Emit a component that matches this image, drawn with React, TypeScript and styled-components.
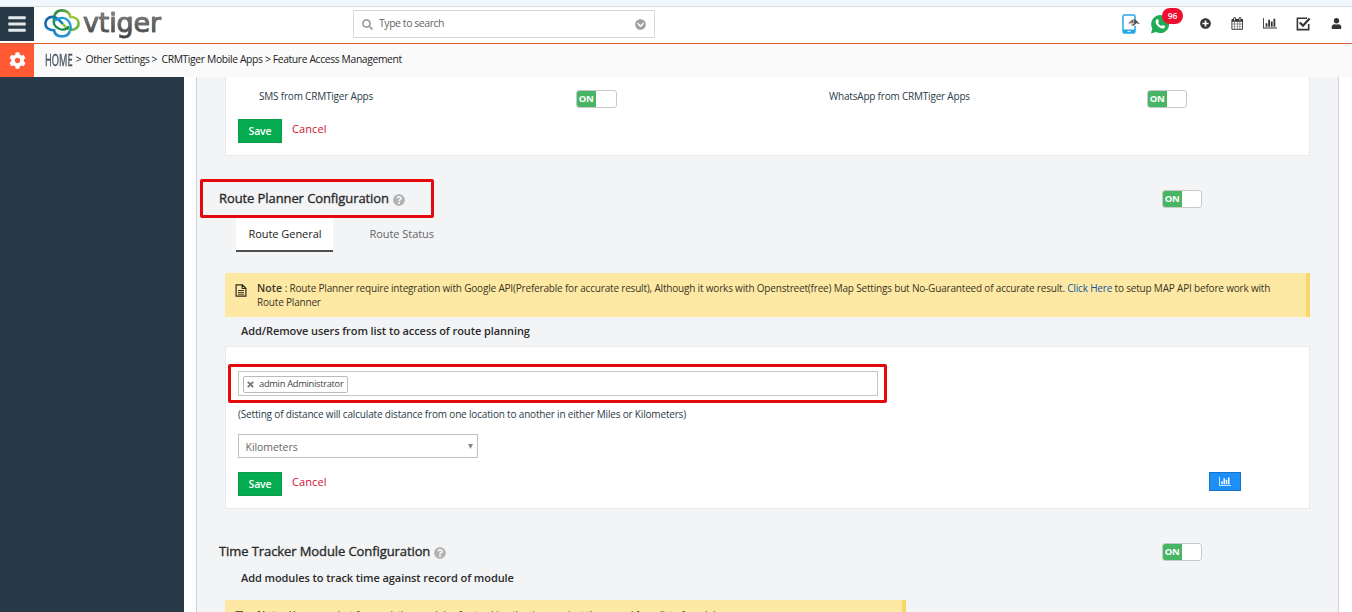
import React from "react";
import styled, { createGlobalStyle } from "styled-components";
import { FaBars, FaChevronCircleDown, FaCog, FaPlusCircle, FaQuestionCircle, FaSearch, FaUser } from "react-icons/fa";

const GlobalStyle = createGlobalStyle`
  * { box-sizing: border-box; }
  body { margin: 0; background: #fff; font-family: "Open Sans", "Noto Sans", sans-serif; color: #2c3b49; }
`;

const Page = styled.div`
  width: 1352px;
  height: 612px;
  overflow: hidden;
  display: flex;
  flex-direction: column;
  background: #fff;
`;
const TopStrip = styled.div`
  height: 7px;
  flex: none;
  background: #f1f7fe;
  border-bottom: 1px solid #dbdfe3;
`;
const Header = styled.header`
  height: 37px;
  flex: none;
  display: flex;
  align-items: flex-start;
  border-bottom: 1px solid #e0592e;
`;
const SquareButton = styled.div<{ $bg: string; $h: number; $fg: string }>`
  width: 34px;
  height: ${(p) => p.$h}px;
  flex: none;
  display: flex;
  align-items: center;
  justify-content: center;
  background: ${(p) => p.$bg};
  color: ${(p) => p.$fg};
`;
const Logo = styled.div`
  display: flex;
  width: 319px;
  height: 36px;
  padding-left: 9px;
`;
const LogoText = styled.div`
  margin-left: 2px;
  margin-top: -2px;
  font: 27px/36px "DejaVu Sans", sans-serif;
  letter-spacing: -0.15px;
  height: 36px;
  background: linear-gradient(#8d8d8d 20%, #333 90%);
  background-clip: text;
  color: transparent;
  -webkit-text-stroke: 0.7px #666;
`;
const Search = styled.div`
  width: 302px;
  height: 28px;
  margin-top: 3px;
  padding: 0 8px;
  display: flex;
  align-items: center;
  border: 1px solid #d5d9d9;
  color: #a0a0a0;
`;
const SearchText = styled.span`
  flex: 1;
  margin-left: 6px;
  padding-bottom: 2px;
  font-size: 10.5px;
  letter-spacing: -0.45px;
  letter-spacing: -0.45px;
  color: #666;
`;
const Tools = styled.div`
  margin-left: auto;
  height: 33px;
  display: flex;
  align-items: center;
  color: #333;
`;
const Tool = styled.div<{ $w: number }>`
  width: ${(p) => p.$w}px;
  display: flex;
  justify-content: center;
  position: relative;
`;
const Badge = styled.span`
  position: absolute;
  left: 12px;
  top: -6px;
  width: 21px;
  height: 16px;
  border-radius: 8px;
  background: #f00c2e;
  color: #fff;
  font-size: 8.5px;
  font-weight: 600;
  line-height: 16px;
  text-align: center;
`;
const Crumbs = styled.nav`
  height: 33px;
  flex: none;
  display: flex;
  background: #fafafa;
  font-size: 10.3px;
  line-height: 30px;
  color: #222;
  white-space: pre;
`;
const Home = styled.span`
  width: 28px;
  margin-left: 11px;
  font-size: 16px;
  line-height: 32px;
  color: #465461;
  -webkit-text-stroke: 0.4px #465461;
  transform: scaleX(0.58);
  transform-origin: left;
`;
const Crumb = styled.span<{ $w: number }>`
  width: ${(p) => p.$w}px;
  letter-spacing: -0.35px;
`;
const Separator = styled.span<{ $w: number }>`
  width: ${(p) => p.$w}px;
`;
const Body = styled.div`
  flex: 1;
  min-height: 0;
  display: flex;
`;
const Sidebar = styled.aside`
  width: 184px;
  flex: none;
  background: #283a48;
`;
const Content = styled.main`
  width: 1143px;
  margin-left: 12px;
  padding-left: 28px;
  background: #f3f4f6;
  border: 1px solid #cfd2d6;
  border-width: 0 1px;
`;
const Panel = styled.section<{ $h: number; $first?: boolean }>`
  width: 1085px;
  height: ${(p) => p.$h}px;
  padding-left: 12px;
  background: #fff;
  border: 1px solid #e8eaeb;
  ${(p) => p.$first && "border-top: 0;"}
`;
const AppRow = styled.div`
  display: flex;
  height: 42px;
  padding: 10px 0 0 21px;
`;
const AppLabel = styled.span<{ $w: number }>`
  width: ${(p) => p.$w}px;
  font-size: 10px;
  line-height: 18px;
  letter-spacing: -0.2px;
`;
const ToggleBox = styled.span<{ $w?: number }>`
  width: ${(p) => p.$w ?? 40}px;
  height: 18px;
  margin-top: 3px;
  display: flex;
  border: 1px solid #c9c9c9;
  border-radius: 3px;
  background: #fff;
  overflow: hidden;
  &::before {
    content: "ON";
    width: 20px;
    height: 18px;
    margin: -1px 0 0 -1px;
    background: #48b565;
    color: #fff;
    font: 700 9.5px/18px "Open Sans", sans-serif;
    letter-spacing: -0.3px;
    text-align: center;
  }
`;
const Gap = styled.span<{ $w: number }>`
  width: ${(p) => p.$w}px;
  flex: none;
`;
const Actions = styled.div`
  display: flex;
  height: 24px;
`;
const Save = styled.button`
  width: 44px;
  height: 24px;
  padding: 0;
  border: 1px solid #0d9d4b;
  background: #04ab4f;
  color: #fff;
  font: 600 10.5px/22px "Open Sans", sans-serif;
  letter-spacing: -0.15px;
`;
const Cancel = styled.a`
  margin-left: 10px;
  font-size: 11px;
  line-height: 20px;
  letter-spacing: 0.1px;
  color: #cf1230;
`;
const ChartButton = styled.button`
  width: 32px;
  height: 19px;
  margin-left: 882px;
  padding: 0;
  display: flex;
  align-items: center;
  justify-content: center;
  border: 1px solid #1573cc;
  background: #1e8ff7;
  color: #fff;
`;
const Heading = styled.div`
  height: 39px;
  margin-top: 23px;
  margin-left: -25px;
  width: 1008px;
  padding: 0 6px 0 19px;
  display: flex;
  align-items: center;
  position: relative;
`;
const Title = styled.h2`
  margin: 0 4px 2px 0;
  font-size: 13px;
  line-height: 18px;
  font-weight: 500;
  -webkit-text-stroke: 0.35px #2b2b2b;
  color: #2b2b2b;
  letter-spacing: -0.09px;
`;
const Help = styled(FaQuestionCircle)`
  margin-top: 3px;
  color: #b1b1b1;
`;
const HeadingToggle = styled(ToggleBox)`
  margin: 1px 0 0 auto;
`;
const RedFrame = styled.span<{ $l: number; $t: number; $w: number }>`
  position: absolute;
  left: ${(p) => p.$l}px;
  top: ${(p) => p.$t}px;
  width: ${(p) => p.$w}px;
  height: 39px;
  border: 3px solid #e40a0c;
  border-radius: 2px;
`;
const Tabs = styled.div`
  display: flex;
  margin-left: 11px;
  height: 34px;
  font-size: 11px;
  line-height: 32px;
`;
const Tab = styled.span<{ $active?: boolean }>`
  width: 97px;
  margin-right: 24px;
  padding-left: 12.5px;
  white-space: nowrap;
  letter-spacing: -0.05px;
  color: ${(p) => (p.$active ? "#222" : "#666")};
  background: ${(p) => (p.$active ? "#fff" : "none")};
  border-bottom: ${(p) => (p.$active ? "2px solid #4d4f51" : "0")};
`;
const Note = styled.div<{ $w: number; $mt: number }>`
  width: ${(p) => p.$w}px;
  height: 44px;
  margin-top: ${(p) => p.$mt}px;
  padding: 8px 0 0 10px;
  display: flex;
  gap: 10px;
  background: #fee9a4;
  border-right: 4px solid #f8d768;
  color: #3a3524;
  font-size: 10px;
  line-height: 14px;
`;
const NoteText = styled.div`
  white-space: nowrap;
  letter-spacing: -0.184px;
  b { font-weight: 600; font-size: 10.5px; letter-spacing: 0.1px; }
  a { color: #1057a5; }
`;
const SubHeading = styled.h3<{ $mt?: number }>`
  margin: ${(p) => p.$mt ?? 0}px 0 0 16px;
  height: 29px;
  font-size: 11px;
  line-height: 28px;
  font-weight: 600;
  color: #2b2b2b;
  letter-spacing: -0.08px;
`;
const UserField = styled.div`
  position: relative;
  width: 640px;
  height: 25px;
  margin-top: 24px;
  padding: 4px;
  display: flex;
  border: 1px solid #c4c4c4;
`;
const UserTag = styled.span`
  width: 105px;
  height: 17px;
  padding: 0 0 1px 3px;
  display: flex;
  align-items: center;
  gap: 5px;
  border: 1px solid #bbb;
  border-radius: 2px;
  font-size: 9.3px;
  line-height: 14px;
  letter-spacing: -0.29px;
  color: #444;
  white-space: nowrap;
  svg { flex: none; margin-top: 1px; }
`;
const Hint = styled.p`
  margin: 9px 0 10px;
  height: 19px;
  font-size: 10px;
  line-height: 19px;
  letter-spacing: -0.175px;
`;
const Select = styled.div`
  width: 240px;
  height: 24px;
  margin-bottom: 14px;
  padding: 1px 4px 0 6.5px;
  display: flex;
  align-items: center;
  justify-content: space-between;
  border: 1px solid #c0c0c0;
  font-size: 10.5px;
  letter-spacing: -0.05px;
  color: #666;
`;

const CloudMark = () => (
  <svg width="38" height="32" viewBox="0 0 38 32" fill="none" strokeWidth="2.7" strokeLinecap="round">
    <defs>
      <linearGradient id="green" x1="0" y1="0" x2="1" y2="1">
        <stop offset="0" stopColor="#118048" />
        <stop offset=".5" stopColor="#a6c93b" />
        <stop offset="1" stopColor="#5fb546" />
      </linearGradient>
      <linearGradient id="blue" x1="0" y1="0" x2="1" y2="1">
        <stop offset="0" stopColor="#1464ac" />
        <stop offset="1" stopColor="#2a9bd7" />
      </linearGradient>
    </defs>
    <path d="M11 10C12 5 15 3.3 19 3.3c4.400 0 8 3 8.400 6.700 5 0 8.200 2.500 8.200 6.400 0 3.800-3.300 6.400-6.800 6.400-4.800 0-6.600-3.200-9-6" stroke="url(#green)" />
    <path d="M26.500 25c-1.300 3.500-4 4.300-7.400 4.300-4.600 0-7.500-2-8-6C5 23.300 2.400 20.300 2.400 16.600c0-4.100 3.200-6.800 7-6.800 5 0 7 3.200 9.500 6.200" stroke="url(#blue)" />
    <path d="M11 10.500c-1 4.500-.2 9.500 5.500 11.500 4 1.200 7.500-.2 9-2.200" stroke="#178c4c" strokeWidth="2.200" />
    <path d="M12.500 13.500c3.500-3 9-3.700 12.300-.3 2.400 2.700 3.400 6.300 2.900 9.800" stroke="#1b9ad8" strokeWidth="2.200" />
  </svg>
);
const ChartIcon = ({ size }: { size: number }) => (
  <svg width={size} height={(size * 7) / 8} viewBox="0 0 2048 1792" fill="currentColor">
    <path d="M640 896v512h-256v-512h256zm384-512v1024h-256v-1024h256zm1024 1152v128h-2048v-1536h128v1408h1920zm-640-896v768h-256v-768h256zm384-384v1152h-256v-1152h256z" />
  </svg>
);
const CalendarIcon = () => (
  <svg width="12.5" height="13" viewBox="0 0 1792 1792" fill="currentColor">
    <path d="M192 1664h288v-288h-288v288zm352 0h320v-288h-320v288zm-352-352h288v-320h-288v320zm352 0h320v-320h-320v320zm-352-384h288v-288h-288v288zm736 736h320v-288h-320v288zm-384-736h320v-288h-320v288zm768 736h288v-288h-288v288zm-384-352h320v-320h-320v320zm-352-864v-288q0-13-9.500-22.500t-22.500-9.500h-64q-13 0-22.500 9.500t-9.500 22.500v288q0 13 9.500 22.500t22.500 9.500h64q13 0 22.500-9.500t9.500-22.500zm736 864h288v-320h-288v320zm-384-384h320v-288h-320v288zm384 0h288v-288h-288v288zm32-480v-288q0-13-9.500-22.500t-22.500-9.500h-64q-13 0-22.500 9.500t-9.500 22.500v288q0 13 9.500 22.500t22.500 9.500h64q13 0 22.500-9.500t9.500-22.500zm384-64v1280q0 52-38 90t-90 38h-1408q-52 0-90-38t-38-90v-1280q0-52 38-90t90-38h128v-96q0-66 47-113t113-47h64q66 0 113 47t47 113v96h384v-96q0-66 47-113t113-47h64q66 0 113 47t47 113v96h128q52 0 90 38t38 90z" />
  </svg>
);
const CheckIcon = () => (
  <svg width="15" height="14" viewBox="0 0 15 14" fill="none" stroke="currentColor">
    <path d="M12.700 7v5.600H1.400V1.200H11" strokeWidth="1.600" />
    <path d="M3.800 5.500 7 8.700 13.600 1.500" strokeWidth="2.300" />
  </svg>
);
const PhoneIcon = () => (
  <svg width="20" height="20" viewBox="0 0 20 20" fill="none">
    <path d="M14 7V2.500Q14 1 12.500 1h-9Q2 1 2 2.500v15Q2 19 3.500 19h9q1.500 0 1.500-1.500V12" stroke="#25a6ea" strokeWidth="1.500" />
    <path d="M2 15.500h12v2.500q0 1-1.500 1h-9Q2 19 2 18z" fill="#25a6ea" />
    <path d="M6.500 17.300h3" stroke="#fff" />
    <path d="M7 9.500 10 6.500 14 5l5 5-3.500-.8L12 12.300 10 10z" fill="#555" />
    <path d="M7 9.500h6M10 6.500v5M13 6l-1.500 5" stroke="#ddd" strokeWidth=".8" />
  </svg>
);
const WhatsIcon = () => (
  <svg width="20" height="20" viewBox="0 0 20 20">
    <path d="M1 19.500 2.300 14.500A9 9 0 1 1 6 18.100z" fill="#22ab55" />
    <path d="M6.600 5.500c.6-.6 1.300-.5 1.600.2l.7 1.700c.2.500-.8 1.200-.7 1.600.6 1.300 1.800 2.400 3.200 3 .5.100 1.100-1.200 1.700-.9l1.700.9c.6.4.1 1.800-.6 2.200-1.300.8-3.200.1-4.900-1-1.600-1.100-3-2.800-3.500-4.300-.4-1.400-.2-2.500.8-3.400z" fill="#fff" />
  </svg>
);
const FileIcon = () => (
  <svg width="12" height="13" viewBox="0 0 12 13" fill="none" stroke="#2f2b1c">
    <path d="M1.100.8h6.300l3.500 3.500v7.900H1.100zM7.200 1v3.500h3.500" strokeWidth="1.200" />
    <path d="M3 6.500h6M3 8.400h6M3 10.200h6" strokeWidth=".9" />
  </svg>
);
const FileSlot = styled.span`
  width: 12px;
  height: 13px;
  margin-top: 3px;
  display: flex;
`;
const RemoveIcon = () => (
  <svg width="7" height="7" viewBox="0 0 7 7" stroke="#777" strokeWidth="1.800">
    <path d="M.8.8l5.400 5.400M6.200.8.8 6.200" />
  </svg>
);
const Arrow = () => (
  <svg width="5" height="5" viewBox="0 0 5 5" fill="#888">
    <path d="M0 0h5L2.500 5z" />
  </svg>
);

export default function App() {
  return (
    <Page>
      <GlobalStyle />
      <TopStrip />
      <Header>
        <SquareButton $bg="#283a48" $fg="#e3e7ea" $h={34}><FaBars size={20} /></SquareButton>
        <Logo>
          <CloudMark />
          <LogoText>vtiger</LogoText>
        </Logo>
        <Search>
          <FaSearch size={11} />
          <SearchText>Type to search</SearchText>
          <FaChevronCircleDown size={11} />
        </Search>
        <Tools>
          <Tool $w={20}><PhoneIcon /></Tool>
          <Gap $w={9} />
          <Tool $w={20}><WhatsIcon /><Badge>96</Badge></Tool>
          <Gap $w={19} />
          <Tool $w={32}><FaPlusCircle size={11} /></Tool>
          <Tool $w={32}><CalendarIcon /></Tool>
          <Tool $w={34}><ChartIcon size={14} /></Tool>
          <Tool $w={33}><CheckIcon /></Tool>
          <Tool $w={32}><FaUser size={11} /></Tool>
        </Tools>
      </Header>
      <Crumbs>
        <SquareButton $bg="#ff5a33" $fg="#fff" $h={33}><FaCog size={17} /></SquareButton>
        <Home>HOME</Home>
        <Separator $w={12.5}>{" >"}</Separator>
        <Crumb $w={66}>Other Settings</Crumb>
        <Separator $w={10}>&gt;</Separator>
        <Crumb $w={300}>CRMTiger Mobile Apps &gt; Feature Access Management</Crumb>
      </Crumbs>
      <Body>
        <Sidebar />
        <Content>
          <Panel $h={79} $first>
            <AppRow>
              <AppLabel $w={317}>SMS from CRMTiger Apps</AppLabel>
              <ToggleBox $w={41} />
              <Gap $w={212} />
              <AppLabel $w={318}>WhatsApp from CRMTiger Apps</AppLabel>
              <ToggleBox />
            </AppRow>
            <Actions><Save>Save</Save><Cancel>Cancel</Cancel></Actions>
          </Panel>

          <Heading>
            <Title>Route Planner Configuration</Title>
            <Help size={12} />
            <HeadingToggle />
            <RedFrame $l={0} $t={0} $w={234} />
          </Heading>
          <Tabs>
            <Tab $active>Route General</Tab>
            <Tab>Route Status</Tab>
          </Tabs>
          <Note $w={1085} $mt={21}>
            <FileSlot><FileIcon /></FileSlot>
            <NoteText>
              <b>Note</b> : Route Planner require integration with Google API(Preferable for accurate result), Although it works with Openstreet(free) Map Settings but No-Guaranteed of accurate result. <a>Click Here</a> to setup MAP API before work with
              <br />
              Route Planner
            </NoteText>
          </Note>
          <SubHeading>Add/Remove users from list to access of route planning</SubHeading>
          <Panel $h={163}>
            <UserField>
              <UserTag><RemoveIcon />admin Administrator</UserTag>
              <RedFrame $l={-11} $t={-8} $w={659} />
            </UserField>
            <Hint>(Setting of distance will calculate distance from one location to another in either Miles or Kilometers)</Hint>
            <Select>Kilometers<Arrow /></Select>
            <Actions>
              <Save>Save</Save>
              <Cancel>Cancel</Cancel>
              <ChartButton><ChartIcon size={12} /></ChartButton>
            </Actions>
          </Panel>

          <Heading>
            <Title>Time Tracker Module Configuration</Title>
            <Help size={12} />
            <HeadingToggle />
          </Heading>
          <SubHeading $mt={-7}>Add modules to track time against record of module</SubHeading>
          <Note $w={681} $mt={7}>
            <FileSlot><FileIcon /></FileSlot>
            <NoteText>
              <b>Note</b> : You can select from existing modules for tracking the time against the record from list of modules
            </NoteText>
          </Note>
        </Content>
      </Body>
    </Page>
  );
}
